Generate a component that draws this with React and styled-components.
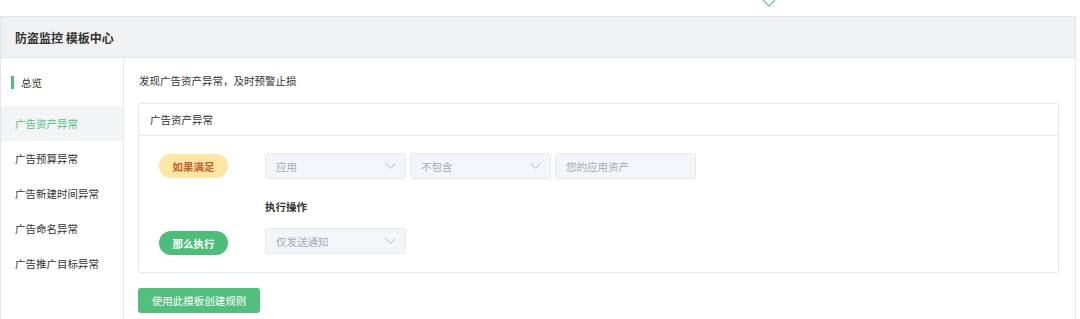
import React from 'react';
import styled, { createGlobalStyle } from 'styled-components';

const GlobalStyle = createGlobalStyle`
    body {
        margin: 0;
        background: #fff;
        font-family: "Noto Sans CJK SC", "Noto Sans", sans-serif;
        color: #333;
    }
`;

const Page = styled.div`
    position: relative;
    width: 1080px;
    height: 319px;
    overflow: hidden;
    padding-top: 16px;
    box-sizing: border-box;
`;

const PopArrow = styled.svg`
    position: absolute;
    top: -1px;
    left: 762px;
`;

const Panel = styled.div`
    width: 1076px;
    box-sizing: border-box;
    border: 1px solid #e4e6e9;
    background: #fff;
`;

const Header = styled.div`
    height: 40px;
    display: flex;
    align-items: center;
    padding: 0 14px;
    background: #f0f1f3;
    border-bottom: 1px solid #e4e6e9;
    font-size: 12px;
    font-weight: 700;
    color: #333;
`;

const Body = styled.div`
    display: flex;
    min-height: 270px;
`;

const Sidebar = styled.div`
    width: 122px;
    flex-shrink: 0;
    border-right: 1px solid #e8e9ec;
`;

const Overview = styled.div`
    height: 48px;
    display: flex;
    align-items: center;
    padding-left: 10px;
    font-size: 10.5px;
    color: #333;

    &::before {
        content: "";
        width: 3px;
        height: 13px;
        background: #4dbd7a;
        margin-right: 7px;
    }
`;

const NavItem = styled.div`
    height: 35px;
    display: flex;
    align-items: center;
    padding-left: 14px;
    font-size: 10.5px;
    color: ${(p) => (p.active ? '#52c17f' : '#333')};
    background: ${(p) => (p.active ? '#f3f4f6' : 'transparent')};
`;

const Content = styled.div`
    flex: 1;
    padding: 15px 16px 0 14px;
`;

const Intro = styled.div`
    font-size: 10.5px;
    line-height: 16px;
    color: #333;
    padding-left: 1px;
    margin-bottom: 14px;
`;

const Card = styled.div`
    width: 921px;
    box-sizing: border-box;
    border: 1px solid #e8e9ec;
    border-radius: 3px;
`;

const CardHeader = styled.div`
    height: 31px;
    display: flex;
    align-items: center;
    padding-left: 11px;
    border-bottom: 1px solid #e8e9ec;
    font-size: 10.5px;
    color: #333;
`;

const CardBody = styled.div`
    padding: 17px 0 18px 20px;
    display: flex;
    flex-direction: column;
    gap: 20px;
`;

const RuleRow = styled.div`
    display: flex;
    align-items: flex-end;
`;

const Pill = styled.div`
    width: 69px;
    height: 24px;
    margin-bottom: ${(p) => p.drop || 1}px;
    border-radius: 12px;
    display: flex;
    align-items: center;
    justify-content: center;
    font-size: 10.5px;
    font-weight: 700;
    color: ${(p) => (p.tone === 'yellow' ? '#c0622b' : '#fff')};
    background: ${(p) => (p.tone === 'yellow' ? '#fde5a3' : '#4dbd7a')};
    margin-right: 37px;
    flex-shrink: 0;
`;

const Fields = styled.div`
    display: flex;
    gap: 4px;
`;

const Stack = styled.div`
    display: flex;
    flex-direction: column;
    gap: 13px;
`;

const Label = styled.div`
    font-size: 10.5px;
    font-weight: 700;
    line-height: 16px;
    color: #333;
`;

const Field = styled.div`
    width: 141px;
    height: 26px;
    box-sizing: border-box;
    display: flex;
    align-items: center;
    justify-content: space-between;
    padding: 0 9px 0 10px;
    background: #f4f5f8;
    border: 1px solid #e6e8eb;
    border-radius: 3px;
    font-size: 10.5px;
    color: #a6aab0;
`;

const CreateButton = styled.button`
    margin-top: 15px;
    width: 122px;
    height: 25px;
    border: none;
    border-radius: 3px;
    background: #52bf7e;
    color: #fff;
    font-family: inherit;
    font-size: 10.5px;
    padding: 0;
    cursor: pointer;
`;

const Chevron = () => (
    <svg width="11" height="6" viewBox="0 0 11 6" fill="none">
        <path d="M0.5 0.5 L5.5 5.3 L10.5 0.5" stroke="#b4b8be" strokeWidth="1" />
    </svg>
);

const Select = ({ children }) => (
    <Field>
        <span>{children}</span>
        <Chevron />
    </Field>
);

const navItems = ['广告资产异常', '广告预算异常', '广告新建时间异常', '广告命名异常', '广告推广目标异常'];

const App = () => {
    return (
        <Page>
            <GlobalStyle />
            <PopArrow width="14" height="8" viewBox="0 0 14 8">
                <path d="M1 1 L7 7 L13 1" fill="#fff" stroke="#5cc48a" strokeWidth="1.2" />
            </PopArrow>
            <Panel>
                <Header>防盗监控 模板中心</Header>
                <Body>
                    <Sidebar>
                        <Overview>总览</Overview>
                        {navItems.map((item, i) => (
                            <NavItem key={item} active={i === 0}>{item}</NavItem>
                        ))}
                    </Sidebar>
                    <Content>
                        <Intro>发现广告资产异常，及时预警止损</Intro>
                        <Card>
                            <CardHeader>广告资产异常</CardHeader>
                            <CardBody>
                                <RuleRow>
                                    <Pill tone="yellow">如果满足</Pill>
                                    <Fields>
                                        <Select>应用</Select>
                                        <Select>不包含</Select>
                                        <Field>您的应用资产</Field>
                                    </Fields>
                                </RuleRow>
                                <RuleRow>
                                    <Pill drop={-1}>那么执行</Pill>
                                    <Stack>
                                        <Label>执行操作</Label>
                                        <Select>仅发送通知</Select>
                                    </Stack>
                                </RuleRow>
                            </CardBody>
                        </Card>
                        <CreateButton>使用此模板创建规则</CreateButton>
                    </Content>
                </Body>
            </Panel>
        </Page>
    )
}

export default App
